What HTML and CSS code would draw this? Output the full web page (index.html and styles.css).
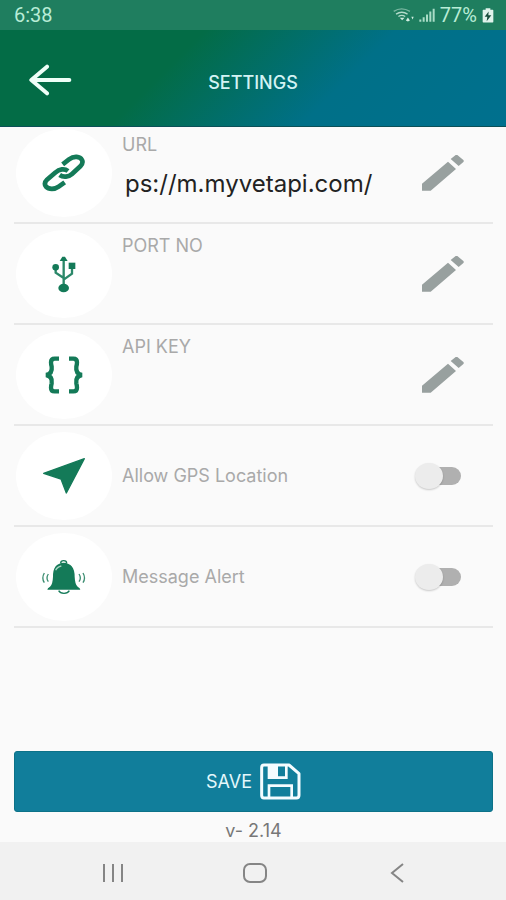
FILE: index.html
```html
<!DOCTYPE html>
<html lang="en">
<head>
<meta charset="utf-8">
<meta name="viewport" content="width=device-width, initial-scale=1">
<title>Settings</title>
<link rel="stylesheet" href="styles.css">
</head>
<body>
<div class="status">
  <span>6:38</span>
  <span class="status-right">
    <svg class="wifi" viewBox="0 0 62 44" aria-hidden="true">
      <g fill="none" stroke="#b4dccb" stroke-width="4"><path d="M2 10Q25-5 50 10" opacity=".6"/><path d="M9 18Q26 7 43 18"/><path d="M16 25Q26 18 36 25"/></g>
      <path fill="#d2eee2" d="M20 29h14l-7 7zM38 37l6-9 6 9-6 3zM54 26h7l-3 8z"/>
    </svg>
    <svg class="signal" viewBox="0 0 48 44" aria-hidden="true">
      <path fill="#a9dcc6" d="M1 34h6v7H1zM11 27h6v14h-6zM21 19h6v22h-6zM31 10h6v31h-6zM41 2h6v39h-6z"/>
    </svg>
    <span>77%</span>
    <svg class="battery" viewBox="0 0 36 44" aria-hidden="true">
      <path fill="#e0f3eb" d="M11 0h14v5h7q2 0 2 2v34q0 2-2 2H4q-2 0-2-2V7q0-2 2-2h7z"/>
      <path fill="#174c3b" d="M20 10 8 26h8l-2 13 14-18h-9z"/>
    </svg>
  </span>
</div>
<header class="header">
  <button class="back" aria-label="Back">
    <svg viewBox="0 0 132 96" aria-hidden="true"><path d="M57 8 10 48l47 40M12 48h112" fill="none" stroke="#effff8" stroke-width="12" stroke-linecap="round" stroke-linejoin="round"/></svg>
  </button>
  <h1>SETTINGS</h1>
</header>
<main class="main">
  <div class="rows">
    <div class="row">
      <span class="disc"><svg class="icon" viewBox="126 86 132 114" aria-hidden="true">
        <g fill="none" stroke="#147a58" stroke-width="14"><path d="M188 117 207 102C222 91 240 93 246 104 250 112 246 118 241 123L216 146C206 155 190 157 179 149"/><path d="M194 171 176 184C164 193 146 193 138 184 132 176 136 168 141 163L167 141C177 131 194 129 204 137"/></g>
      </svg></span>
      <div class="field">
        <label for="url">URL</label>
        <input id="url" type="text" value="ps://m.myvetapi.com/">
      </div>
      <button class="edit" aria-label="Edit URL"><svg class="icon" viewBox="126 87 132 114" aria-hidden="true"><path fill="#98a09f" d="m129 176 78-66 24 22-76 65h-26zM215 102l15-12h5l19 16v4l-15 13z"/></svg></button>
    </div>
    <div class="row">
      <span class="disc"><svg class="icon" viewBox="126 388 132 114" aria-hidden="true">
        <g fill="none" stroke="#2b8869" stroke-width="7"><path d="M191 402v76M167 426v15l24 16M216 428v16l-25 18"/></g>
        <g fill="#147a58"><path d="m179 406 8-13h8l8 13z"/><ellipse cx="191" cy="487" rx="16" ry="13"/><circle cx="167" cy="425" r="10"/><path d="M206 411h20v19h-20z"/></g>
      </svg></span>
      <div class="field">
        <label for="port">PORT NO</label>
        <input id="port" type="text">
      </div>
      <button class="edit" aria-label="Edit port"><svg class="icon" viewBox="126 87 132 114" aria-hidden="true"><path fill="#98a09f" d="m129 176 78-66 24 22-76 65h-26zM215 102l15-12h5l19 16v4l-15 13z"/></svg></button>
    </div>
    <div class="row">
      <span class="disc"><svg class="icon" viewBox="126 91 132 114" aria-hidden="true">
        <path d="M177 99h-13q-11 0-11 11 0 6 2 13 3 22-17 25 20 3 17 25-2 7-2 13 0 11 11 11h13M207 99h13q11 0 11 11 0 6-2 13-3 22 17 25-20 3-17 25 2 7 2 13 0 11-11 11h-13" fill="none" stroke="#147a58" stroke-width="13"/>
      </svg></span>
      <div class="field">
        <label for="key">API KEY</label>
        <input id="key" type="text">
      </div>
      <button class="edit" aria-label="Edit API key"><svg class="icon" viewBox="126 87 132 114" aria-hidden="true"><path fill="#98a09f" d="m129 176 78-66 24 22-76 65h-26zM215 102l15-12h5l19 16v4l-15 13z"/></svg></button>
    </div>
    <div class="row">
      <span class="disc"><svg class="icon" viewBox="126 394 132 114" aria-hidden="true">
        <path d="m131 443 122-44-54 103-16-42z" fill="#147a58" stroke="#147a58" stroke-width="4" stroke-linejoin="round"/>
      </svg></span>
      <label class="option" for="gps">Allow GPS Location</label>
      <input class="switch" id="gps" type="checkbox" role="switch">
    </div>
    <div class="row">
      <span class="disc"><svg class="icon" viewBox="126 696 132 114" aria-hidden="true">
        <path d="M182 712q0-8 9-8t9 8M176 794q4 8 16 8t16-8" fill="none" stroke="#147a58" stroke-width="4"/>
        <path d="M142 791q0-5 8-9 8-6 9-30-1-40 32-42 33 2 33 42 1 24 9 30 8 4 8 9z" fill="#147a58"/>
        <path d="M167 733q4-10 17-13" fill="none" stroke="#a6d2c1" stroke-width="4"/>
        <path d="M133 741q-9 15 0 29M145 744q-8 12 0 23M249 741q9 15 0 29M237 744q8 12 0 23" fill="none" stroke="#3d8e72" stroke-width="4"/>
      </svg></span>
      <label class="option" for="alert">Message Alert</label>
      <input class="switch" id="alert" type="checkbox" role="switch">
    </div>
  </div>
  <div class="footer">
    <button class="save">SAVE
      <svg viewBox="0 0 123 111" aria-hidden="true">
        <path d="M12 6h75l30 26v65q0 8-8 8H12q-7 0-7-8V14q0-8 7-8z" fill="none" stroke="#f4fcff" stroke-width="9" stroke-linejoin="round"/>
        <path d="M27 104V68h68v36M79 8v36H27V8" fill="none" stroke="#f4fcff" stroke-width="8"/>
        <path d="M26 8h28v34H26z" fill="#f4fcff"/>
      </svg>
    </button>
    <p class="version">v- 2.14</p>
  </div>
</main>
<nav class="nav">
  <button aria-label="Recent apps"><svg viewBox="0 0 28 24" aria-hidden="true"><path d="M5 3v18M14 3v18M23 3v18"/></svg></button>
  <button aria-label="Home"><svg viewBox="0 0 28 24" aria-hidden="true"><rect x="3" y="3" width="22" height="18" rx="6"/></svg></button>
  <button aria-label="Back"><svg viewBox="0 0 28 24" aria-hidden="true"><path d="M20 3 9 12l11 9"/></svg></button>
</nav>
</body>
</html>
```
FILE: styles.css
```css
* { box-sizing: border-box; }

body {
  margin: 0;
  min-height: 100vh;
  display: flex;
  flex-direction: column;
  background: #fafafa;
  font-family: Inter, Roboto, sans-serif;
  font-size: 18px;
}

button {
  border: 0;
  padding: 0;
  background: none;
  font: inherit;
  cursor: pointer;
}

svg { display: block; }

.status {
  height: 30px;
  padding: 0 12px 0 14px;
  display: flex;
  align-items: center;
  justify-content: space-between;
  background: #1f7e5f;
  color: #b8ecd6;
  font-family: Roboto, sans-serif;
  font-size: 20px;
}

.status-right {
  display: flex;
  align-items: center;
  gap: 5px;
}

.wifi { width: 21px; height: 15px; }
.signal { width: 16px; height: 15px; }
.battery { width: 12px; height: 15px; }

.header {
  position: relative;
  z-index: 1;
  height: 97px;
  padding: 8px 28px 0;
  display: grid;
  grid-template-columns: 1fr auto 1fr;
  align-items: center;
  border-bottom: 1px solid #0b5058;
  background: linear-gradient(135deg, #036c46 34%, #007088 66%, #00708e 100%);
}

.back { justify-self: start; }
.back svg { width: 44px; height: 32px; margin-bottom: 4px; }

.header h1 {
  margin: 0;
  color: #d3f3f4;
  font-size: 18px;
  font-weight: 500;
}

.main {
  flex: 1;
  padding: 0 13px 0 14px;
  display: flex;
  flex-direction: column;
  justify-content: space-between;
}

/* The first row is tucked slightly under the header. */
.rows { margin-top: -4px; }

.row {
  height: 101px;
  padding-right: 28px;
  display: flex;
  align-items: center;
  border-bottom: 2px solid #e8e8e8;
}

.disc {
  flex: none;
  width: 96px;
  height: 88px;
  margin: 0 10px 0 2px;
  display: grid;
  place-items: center;
  border-radius: 50%;
  background: #fff;
}

.icon { width: 44px; height: 38px; }

.field {
  flex: 1;
  min-width: 0;
  align-self: stretch;
  padding-top: 10px;
  display: flex;
  flex-direction: column;
}

.field label,
.option {
  color: #a9a9a9;
  line-height: 24px;
}

.field input {
  width: 100%;
  height: 40px;
  margin-top: 6px;
  padding: 0 3px;
  border: 0;
  background: none;
  color: #222;
  font: inherit;
  font-size: 24px;
}

.option { flex: 1; }

.switch {
  appearance: none;
  position: relative;
  width: 46px;
  height: 26px;
  margin: 0 4px 0 0;
}

.switch::before {
  content: "";
  position: absolute;
  inset: 4px 0 4px 7px;
  border-radius: 9px;
  background: #b0b0b0;
}

.switch::after {
  content: "";
  position: absolute;
  inset: 0 18px 0 0;
  border-radius: 50%;
  background: #ececec;
  box-shadow: 0 1px 2px #0003;
}

.switch:checked::after { inset: 0 0 0 18px; }

.save {
  width: 100%;
  height: 61px;
  display: flex;
  align-items: center;
  justify-content: center;
  gap: 8px;
  border: 1px solid #0c7288;
  border-radius: 3px;
  background: #117e9b;
  color: #e4f8fc;
}

.save svg { width: 41px; height: 37px; }

.version {
  margin: 0;
  padding: 8px 0 0;
  color: #777;
  line-height: 22px;
  text-align: center;
}

.nav {
  height: 58px;
  padding-left: 4px;
  display: grid;
  grid-template-columns: repeat(3, 142px);
  justify-content: center;
  align-items: center;
  background: #f1f1f1;
}

.nav button {
  display: grid;
  place-items: center;
  height: 100%;
  padding-top: 4px;
}

.nav svg {
  width: 28px;
  height: 24px;
  fill: none;
  stroke: #858585;
  stroke-width: 2;
}
```
